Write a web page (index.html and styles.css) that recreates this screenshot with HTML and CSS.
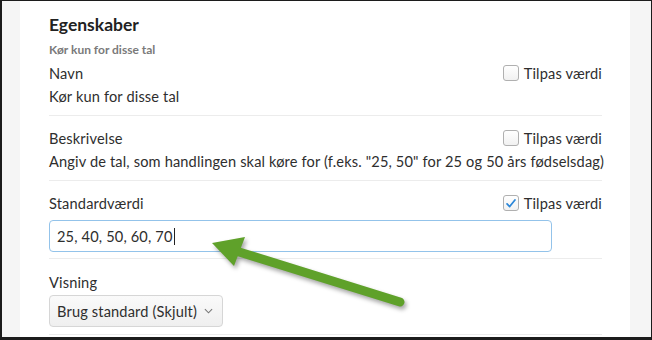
FILE: index.html
```html
<!DOCTYPE html>
<html lang="da">
<head>
    <meta charset="UTF-8">
    <title>Egenskaber</title>
    <link rel="stylesheet" href="styles.css">
</head>
<body>
    <div class="frame">
        <div class="panel">
            <h2 class="panel-title">Egenskaber</h2>
            <div class="panel-sub">Kør kun for disse tal</div>

            <div class="field field-first">
                <div class="field-head">
                    <span class="field-label">Navn</span>
                    <label class="custom"><span class="check"></span>Tilpas værdi</label>
                </div>
                <div class="field-value">Kør kun for disse tal</div>
            </div>

            <div class="field">
                <div class="field-head">
                    <span class="field-label">Beskrivelse</span>
                    <label class="custom"><span class="check"></span>Tilpas værdi</label>
                </div>
                <div class="field-value">Angiv de tal, som handlingen skal køre for (f.eks. "25, 50" for 25 og 50 års fødselsdag)</div>
            </div>

            <div class="field field-input">
                <div class="field-head">
                    <span class="field-label">Standardværdi</span>
                    <label class="custom">
                        <span class="check checked">
                            <svg viewBox="0 0 16 16" width="15" height="15"><path d="M3.5 8.5 L6.5 11.5 L12.5 4" fill="none" stroke="#2a86d8" stroke-width="2" stroke-linecap="round" stroke-linejoin="round"/></svg>
                        </span>Tilpas værdi
                    </label>
                </div>
                <div class="text-input">25, 40, 50, 60, 70<span class="caret"></span></div>
            </div>

            <div class="field field-select">
                <div class="field-head">
                    <span class="field-label">Visning</span>
                </div>
                <div class="select">
                    Brug standard (Skjult)
                    <svg class="chevron" viewBox="0 0 10 6" width="9" height="6"><path d="M1 1 L5 5 L9 1" fill="none" stroke="#777" stroke-width="1.2"/></svg>
                </div>
            </div>
        </div>

        <svg class="arrow" width="652" height="340" viewBox="0 0 652 340">
            <line x1="400" y1="302" x2="236" y2="251" stroke="#5fa12a" stroke-width="9" stroke-linecap="round"/>
            <polygon points="212,243 245,237 234,266" fill="#5fa12a"/>
        </svg>
    </div>
</body>
</html>
```

FILE: styles.css
```css
* {
    box-sizing: border-box;
}

body {
    margin: 0;
    font-family: Lato, 'Open Sans', sans-serif;
    color: #2e2e2e;
}

.frame {
    position: relative;
    width: 652px;
    height: 340px;
    background: #f5f5f5;
    border: 1px solid #1c1c1c;
    border-left-width: 2px;
    border-bottom-width: 3px;
    padding: 0 21px 0 18px;
    overflow: hidden;
}

.panel {
    background: #fff;
    height: 100%;
    padding: 13px 28px 0 29px;
}

.panel-title {
    margin: 0;
    font-size: 17.5px;
    line-height: 22px;
    font-weight: 700;
    color: #222;
}

.panel-sub {
    margin-top: 6px;
    font-size: 12px;
    line-height: 16px;
    font-weight: 700;
    color: #7a7a7a;
}

.field {
    padding: 11px 0 7px;
    border-bottom: 1px solid #ececec;
    font-size: 14.6px;
    letter-spacing: 0.15px;
    white-space: nowrap;
}

.field-first {
    padding-top: 4px;
}

.field-head {
    display: flex;
    justify-content: space-between;
    align-items: center;
    height: 22px;
}

.field-value {
    margin-top: 2px;
    line-height: 22px;
}

.custom {
    display: flex;
    align-items: center;
    gap: 5px;
}

.check {
    width: 16px;
    height: 16px;
    border: 1px solid #b0b0b0;
    border-radius: 3px;
    background: linear-gradient(#fff, #f1f1f1);
    display: flex;
    align-items: center;
    justify-content: center;
}

.field-input {
    padding-bottom: 6px;
}

.text-input {
    margin-top: 6px;
    width: 503px;
    height: 32px;
    border: 1px solid #93c3ea;
    border-radius: 4px;
    padding: 0 7px;
    display: flex;
    align-items: center;
}

.caret {
    width: 1px;
    height: 17px;
    background: #222;
    margin-left: 1px;
}

.field-select {
    padding-top: 12px;
}

.select {
    margin-top: 2px;
    display: inline-flex;
    align-items: center;
    gap: 7px;
    height: 32px;
    padding: 0 9px 0 7px;
    border: 1px solid #d6d6d6;
    border-radius: 4px;
    background: linear-gradient(#fafafa, #efefef);
}

.arrow {
    position: absolute;
    left: -2px;
    top: -1px;
    pointer-events: none;
    filter: drop-shadow(2px 3px 2px rgba(0, 0, 0, 0.35));
}
```
